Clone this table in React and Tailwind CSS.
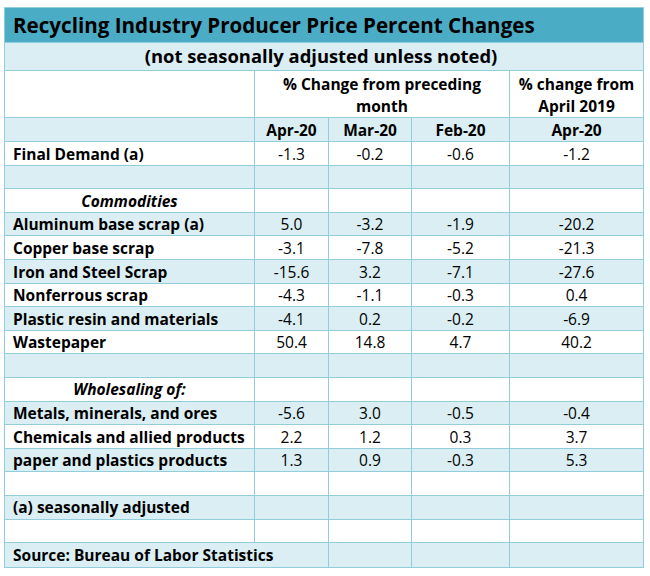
import React from "react";

const rows = [
  { label: "Final Demand (a)", v: ["-1.3", "-0.2", "-0.6", "-1.2"] },
  { blank: true },
  { section: "Commodities" },
  { label: "Aluminum base scrap (a)", v: ["5.0", "-3.2", "-1.9", "-20.2"] },
  { label: "Copper base scrap", v: ["-3.1", "-7.8", "-5.2", "-21.3"] },
  { label: "Iron and Steel Scrap", v: ["-15.6", "3.2", "-7.1", "-27.6"] },
  { label: "Nonferrous scrap", v: ["-4.3", "-1.1", "-0.3", "0.4"] },
  { label: "Plastic resin and materials", v: ["-4.1", "0.2", "-0.2", "-6.9"] },
  { label: "Wastepaper", v: ["50.4", "14.8", "4.7", "40.2"] },
  { blank: true },
  { section: "Wholesaling of:" },
  { label: "Metals, minerals, and ores", v: ["-5.6", "3.0", "-0.5", "-0.4"] },
  { label: "Chemicals and allied products", v: ["2.2", "1.2", "0.3", "3.7"] },
  { label: "paper and plastics products", v: ["1.3", "0.9", "-0.3", "5.3"] },
  { blank: true },
  { label: "(a) seasonally adjusted", v: ["", "", "", ""] },
  { blank: true },
  { source: true },
];

const td = "border border-[#92cddc] p-0";

export default function App() {
  return (
    <div className="w-[650px] h-[576px] bg-white pt-[7px] pl-[4px]" style={{ fontFamily: "'Open Sans', Lato, sans-serif" }}>
      <table className="table-fixed border-collapse w-[639px] text-black text-[15.5px] leading-none">
        <colgroup>
          <col className="w-[250px]" />
          <col className="w-[74px]" />
          <col className="w-[83px]" />
          <col className="w-[98px]" />
          <col className="w-[134px]" />
        </colgroup>
        <tbody>
          <tr className="h-[35px] bg-[#4bacc6]">
            <td colSpan={5} className={`${td} pl-[8px] text-[20.6px] font-bold`}>
              Recycling Industry Producer Price Percent Changes
            </td>
          </tr>
          <tr className="h-[28px] bg-[#daeef3]">
            <td colSpan={5} className={`${td} text-center text-[18.4px] font-bold pr-[6px]`}>
              (not seasonally adjusted unless noted)
            </td>
          </tr>
          <tr className="h-[46px] bg-white">
            <td className={td}></td>
            <td colSpan={3} className={`${td} text-center font-bold align-top pt-[2px] leading-[22px]`}>
              % Change from preceding
              <br />
              month
            </td>
            <td className={`${td} text-center font-bold align-top pt-[2px] leading-[22px]`}>
              % change from
              <br />
              April 2019
            </td>
          </tr>
          <tr className="h-[24px] bg-[#daeef3]">
            <td className={td}></td>
            <td className={`${td} text-center font-bold pt-[2px]`}>Apr-20</td>
            <td className={`${td} text-center font-bold pt-[2px]`}>Mar-20</td>
            <td className={`${td} text-center font-bold pt-[2px]`}>Feb-20</td>
            <td className={`${td} text-center font-bold pt-[2px]`}>Apr-20</td>
          </tr>
          {rows.map((r, i) => {
            const bg = i % 2 === 0 ? "bg-white" : "bg-[#daeef3]";
            if (r.source) {
              return (
                <tr key={i} className={`h-[24.5px] ${bg}`}>
                  <td colSpan={2} className={`${td} pl-[8px] pt-[2px] font-bold`}>Source: Bureau of Labor Statistics</td>
                  <td className={td}></td>
                  <td className={td}></td>
                  <td className={td}></td>
                </tr>
              );
            }
            return (
              <tr key={i} className={`h-[23.6px] ${bg}`}>
                {r.section ? (
                  <td className={`${td} text-center font-bold italic pt-[2px]`}>{r.section}</td>
                ) : (
                  <td className={`${td} pl-[8px] pt-[2px] font-bold`}>{r.label || ""}</td>
                )}
                {[0, 1, 2, 3].map((k) => (
                  <td key={k} className={`${td} text-center pt-[2px]`}>
                    {r.v ? r.v[k] : ""}
                  </td>
                ))}
              </tr>
            );
          })}
        </tbody>
      </table>
    </div>
  );
}
